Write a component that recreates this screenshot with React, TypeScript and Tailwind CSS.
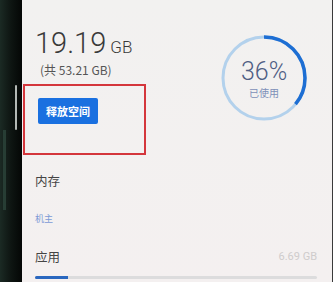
import React from "react";

const cjk = { fontFamily: '"Noto Sans CJK SC", "Noto Sans", sans-serif' };
const num = { fontFamily: 'Roboto, "Noto Sans CJK SC", sans-serif' };

function Ring() {
  const r = 41;
  const c = 2 * Math.PI * r;
  const pct = 0.36;
  return (
    <div className="relative w-[88px] h-[88px]">
      <svg width="88" height="88" viewBox="0 0 88 88" className="absolute inset-0">
        <circle cx="44" cy="44" r={r} fill="none" stroke="#b3d1ec" strokeWidth="3" />
        <circle
          cx="44"
          cy="44"
          r={r}
          fill="none"
          stroke="#1d6ed3"
          strokeWidth="3.5"
          strokeDasharray={`${c * pct} ${c}`}
          transform="rotate(-90 44 44)"
        />
      </svg>
      <div className="absolute inset-0 flex flex-col items-center pt-[23px]">
        <div className="text-[25px] leading-[30px] font-light text-[#4f5e84]" style={num}>36%</div>
        <div className="text-[10px] leading-[11px] text-[#7d8fb8]" style={cjk}>已使用</div>
      </div>
    </div>
  );
}

export default function App() {
  return (
    <div className="flex w-[333px] h-[282px] overflow-hidden bg-[#f1f0ef]">
      <div className="relative w-[22px] h-full bg-gradient-to-r from-[#1b2a24] via-[#0e1512] to-[#050706]">
        <div className="absolute left-[15px] top-[85px] w-[2px] h-[45px] bg-[#dfe3e0] opacity-80 rounded-full" />
        <div className="absolute left-[3px] top-[130px] w-[3px] h-[80px] bg-[#2f4a3e] opacity-70" />
      </div>
      <div className="relative flex-1 h-full border-r border-[#3a3a3a] bg-gradient-to-b from-[#f2f1f0] to-[#f4f0f0]">
        <div className="flex pl-[13px] pr-[24px] pt-[27px]">
          <div className="flex-1 flex flex-col">
            <div className="flex items-baseline text-[#3a3a3a]" style={num}>
              <span className="text-[29px] leading-[32px] font-light">19.19</span>
              <span className="text-[17px] leading-[20px] ml-[4px] font-light">GB</span>
            </div>
            <div className="text-[12px] leading-[16px] text-[#555] mt-[3px] ml-[5px]" style={cjk}>
              (共 53.21 GB)
            </div>
            <div className="mt-[20px] ml-[3px]">
              <button
                className="w-[60px] h-[26px] bg-[#1a70e0] text-white text-[11px] font-bold rounded-[2px] flex items-center justify-center"
                style={cjk}
              >
                释放空间
              </button>
            </div>
          </div>
          <div className="mt-[7px]">
            <Ring />
          </div>
        </div>
        <div className="absolute left-[1px] top-[84px] w-[123px] h-[71px] border-2 border-[#d4363c]" />
        <div className="pl-[13px] pr-[15px] mt-[49px] flex flex-col">
          <div className="text-[12.5px] leading-[16px] text-[#444]" style={cjk}>内存</div>
          <div className="text-[9px] leading-[12px] text-[#7c9ad6] mt-[24px]" style={cjk}>机主</div>
          <div className="flex items-end justify-between mt-[24px]">
            <div className="text-[12.5px] leading-[16px] text-[#444]" style={cjk}>应用</div>
            <div className="text-[11px] leading-[14px] text-[#cfcccc] mb-[1px]" style={num}>6.69 GB</div>
          </div>
          <div className="mt-[11px] h-[3px] bg-[#dcdcdd] rounded-full overflow-hidden flex">
            <div className="h-full w-[33px] bg-[#2a67bf]" />
          </div>
        </div>
      </div>
    </div>
  );
}
